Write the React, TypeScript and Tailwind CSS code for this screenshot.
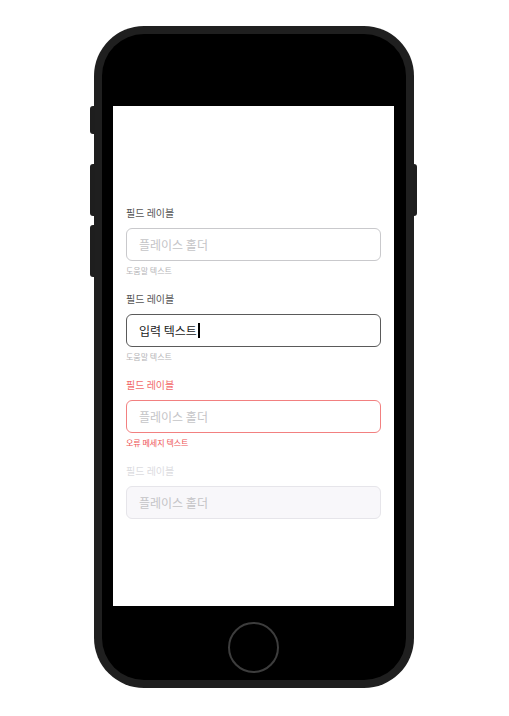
import React from "react";

const font = { fontFamily: '"Noto Sans CJK KR", "Noto Sans", sans-serif' };

function Field({
  label,
  variant,
  text,
  helper,
}: {
  label: string;
  variant: "default" | "focus" | "error" | "disabled";
  text: string;
  helper?: string;
}) {
  const labelColor =
    variant === "error" ? "text-[#f26b6b]" : variant === "disabled" ? "text-[#dcdcdf]" : "text-[#555555]";
  const boxCls =
    variant === "focus"
      ? "border-[#5a5a5a] bg-white"
      : variant === "error"
      ? "border-[#f28080] bg-white"
      : variant === "disabled"
      ? "border-[#e6e5ea] bg-[#f8f7fa]"
      : "border-[#c9c9cc] bg-white";
  return (
    <div className="flex flex-col">
      <div className={`text-[10px] leading-[14px] ${labelColor}`}>{label}</div>
      <div className={`mt-[8px] h-[33px] rounded-[6px] border flex items-center px-[12px] ${boxCls}`}>
        {variant === "focus" ? (
          <span className="text-[12px] text-[#222222] flex items-center">
            {text}
            <span className="inline-block w-[2px] h-[15px] bg-black ml-[1px]" />
          </span>
        ) : (
          <span className="text-[12px] text-[#c4c4c7]">{text}</span>
        )}
      </div>
      {helper && (
        <div
          className={`mt-[4px] text-[8px] leading-[12px] ${
            variant === "error" ? "text-[#ee5555]" : "text-[#b5b5b8]"
          }`}
        >
          {helper}
        </div>
      )}
    </div>
  );
}

export default function App() {
  return (
    <div className="w-[509px] h-[716px] bg-white flex justify-start pl-[94px] pt-[26px]" style={font}>
      <div className="relative w-[320px] h-[662px]">
        {/* side buttons */}
        <div className="absolute left-[-4px] top-[80px] w-[5px] h-[28px] rounded-l-[3px] bg-[#1e1e1e]" />
        <div className="absolute left-[-4px] top-[138px] w-[5px] h-[52px] rounded-l-[3px] bg-[#1e1e1e]" />
        <div className="absolute left-[-4px] top-[199px] w-[5px] h-[52px] rounded-l-[3px] bg-[#1e1e1e]" />
        <div className="absolute right-[-3px] top-[138px] w-[4px] h-[52px] rounded-r-[3px] bg-[#1e1e1e]" />
        <div className="w-full h-full rounded-[50px] bg-[#1f1f1f] p-[8px]">
          <div className="w-full h-full rounded-[42px] bg-black flex flex-col pt-[72px] pl-[11px]">
            <div className="w-[281px] h-[500px] bg-white px-[13px] pt-[100px] flex flex-col gap-[15px]">
              <Field label="필드 레이블" variant="default" text="플레이스 홀더" helper="도움말 텍스트" />
              <Field label="필드 레이블" variant="focus" text="입력 텍스트" helper="도움말 텍스트" />
              <Field label="필드 레이블" variant="error" text="플레이스 홀더" helper="오류 메세지 텍스트" />
              <Field label="필드 레이블" variant="disabled" text="플레이스 홀더" />
            </div>
            <div className="mt-[16px] ml-[115px] w-[51px] h-[51px] rounded-full border-2 border-[#3d3d3d]" />
          </div>
        </div>
      </div>
    </div>
  );
}
